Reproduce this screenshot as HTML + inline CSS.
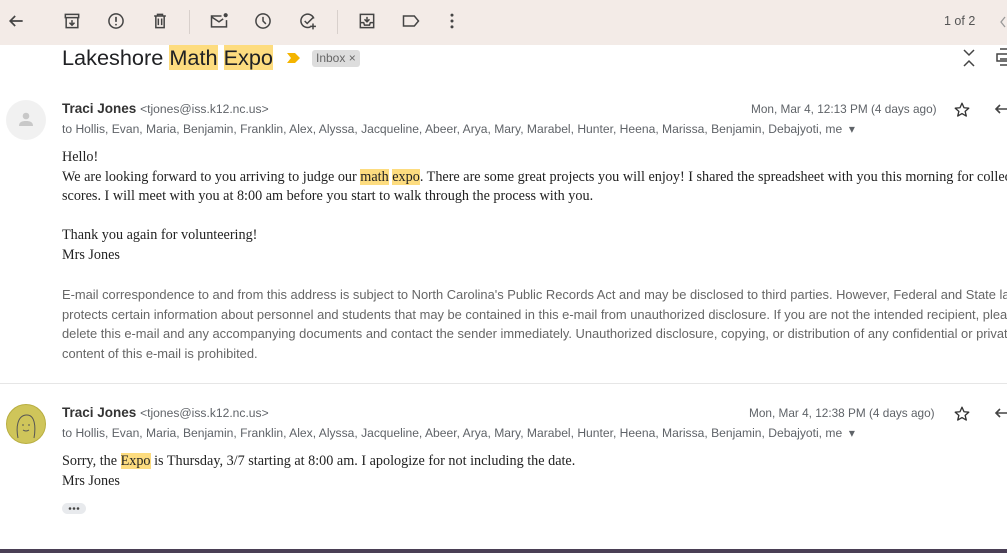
<!DOCTYPE html>
<html><head><meta charset="utf-8"><style>
*{margin:0;padding:0;box-sizing:border-box}
body{width:1007px;height:553px;overflow:hidden;background:#fff;position:relative;font-family:"Liberation Sans",Arial,sans-serif;color:#222}
.a{position:absolute;white-space:nowrap}
.tb{position:absolute;left:0;top:0;width:1007px;height:45px;background:#f3ebe7}
.ic{position:absolute;top:11px}
.hl{background:#fddc7f}
.ser{font-family:"Liberation Serif","DejaVu Serif",serif;font-size:14.2px;color:#222}
.sm{font-size:12.1px;color:#5f6368}
</style></head><body>
<div class="tb"></div>
<svg class="ic" style="left:6px" width="20" height="20" viewBox="0 0 24 24"><path d="M20 12H5M11 6l-6 6 6 6" fill="none" stroke="#444" stroke-width="2"/></svg>
<svg class="ic" style="left:62px" width="20" height="20" viewBox="0 0 24 24"><path d="M4 4h16v4H4zM5 8v12h14V8M12 11v6M9 14l3 3 3-3" fill="none" stroke="#444" stroke-width="1.8"/></svg>
<svg class="ic" style="left:106px" width="20" height="20" viewBox="0 0 24 24"><circle cx="12" cy="12" r="8.5" fill="none" stroke="#444" stroke-width="1.8"/><path d="M12 7v6M12 15.5v1.8" stroke="#444" stroke-width="2"/></svg>
<svg class="ic" style="left:150px" width="20" height="20" viewBox="0 0 24 24"><path d="M5 6h14M9 6V4h6v2M7 6v14h10V6M10 9v8M14 9v8" fill="none" stroke="#444" stroke-width="1.8"/></svg>
<div class="a" style="left:189px;top:10px;width:1px;height:24px;background:#d8d0cc"></div>
<svg class="ic" style="left:209px" width="20" height="20" viewBox="0 0 24 24"><path d="M15 6H3v13h18v-8M3 7l9 6 5-3.5" fill="none" stroke="#444" stroke-width="1.8"/><circle cx="20" cy="5" r="2.5" fill="#444"/></svg>
<svg class="ic" style="left:253px" width="20" height="20" viewBox="0 0 24 24"><circle cx="12" cy="12" r="8.5" fill="none" stroke="#444" stroke-width="1.8"/><path d="M12 7v5l3.5 3.5" fill="none" stroke="#444" stroke-width="1.8"/></svg>
<svg class="ic" style="left:298px" width="20" height="20" viewBox="0 0 24 24"><path d="M19 9a8 8 0 1 0-4 10M8 12l3 3 7-7M18 15v7M14.5 18.5h7" fill="none" stroke="#444" stroke-width="1.8"/></svg>
<div class="a" style="left:337px;top:10px;width:1px;height:24px;background:#d8d0cc"></div>
<svg class="ic" style="left:357px" width="20" height="20" viewBox="0 0 24 24"><path d="M4 4h16v16H4zM4 14h4l1 3h6l1-3h4M12 7v6M9 10l3 3 3-3" fill="none" stroke="#444" stroke-width="1.8"/></svg>
<svg class="ic" style="left:401px" width="20" height="20" viewBox="0 0 24 24"><path d="M3 6h13l5 6-5 6H3z" fill="none" stroke="#444" stroke-width="1.8"/></svg>
<svg class="ic" style="left:442px" width="20" height="20" viewBox="0 0 24 24"><circle cx="12" cy="5" r="1.8" fill="#444"/><circle cx="12" cy="12" r="1.8" fill="#444"/><circle cx="12" cy="19" r="1.8" fill="#444"/></svg>
<div class="a" style="left:944px;top:14px;font-size:12.5px;color:#555">1 of 2</div>
<svg class="a" style="left:999px;top:16px" width="8" height="12" viewBox="0 0 8 12"><path d="M6 1L2 6l4 5" fill="none" stroke="#999" stroke-width="1.3"/></svg>

<div class="a" style="left:62px;top:44px;font-size:21.7px;color:#202124;line-height:28px">Lakeshore <span class="hl">Math</span> <span class="hl">Expo</span></div>
<svg class="a" style="left:287px;top:52px" width="14" height="12" viewBox="0 0 14 12"><path d="M0 1h8l5 5-5 5H0l4-5z" fill="#f4b400"/></svg>
<div class="a" style="left:312px;top:50px;height:17px;padding:0 4px;background:#ddd;border-radius:3px;font-size:12px;line-height:17px;color:#666">Inbox ×</div>
<svg class="a" style="left:962px;top:48px" width="14" height="20" viewBox="0 0 14 20"><path d="M2 2l5 5 5-5M2 18l5-5 5 5" fill="none" stroke="#444" stroke-width="1.5"/></svg>
<svg class="a" style="left:996px;top:48px" width="14" height="18" viewBox="0 0 14 18"><path d="M4 1h8v5M1 6h12v7H1zM4 11h8v6H4" fill="none" stroke="#444" stroke-width="1.5"/></svg>

<div class="a" style="left:6px;top:100px;width:40px;height:40px;border-radius:50%;background:#f1f1f1"></div>
<svg class="a" style="left:18px;top:111px" width="16" height="16" viewBox="0 0 16 16"><circle cx="8" cy="5" r="3.3" fill="#c8c8c8"/><path d="M1 15c0-4 3-5 7-5s7 1 7 5z" fill="#c8c8c8"/></svg>
<div class="a" style="left:62px;top:101px;font-size:13.5px"><b style="color:#333">Traci Jones</b> <span class="sm">&lt;tjones@iss.k12.nc.us&gt;</span></div>
<div class="a sm" style="left:62px;top:122px">to Hollis, Evan, Maria, Benjamin, Franklin, Alex, Alyssa, Jacqueline, Abeer, Arya, Mary, Marabel, Hunter, Heena, Marissa, Benjamin, Debajyoti, me &nbsp;▾</div>
<div class="a" style="left:751px;top:102px;font-size:11.8px;color:#5f6368">Mon, Mar 4, 12:13 PM (4 days ago)</div>
<svg class="a" style="left:953px;top:101px" width="18" height="18" viewBox="0 0 24 24"><path d="M12 3l2.7 6 6.3.6-4.8 4.2 1.5 6.3L12 16.8 6.3 20.1l1.5-6.3L3 9.6 9.3 9z" fill="none" stroke="#333" stroke-width="1.8" stroke-linejoin="round"/></svg>
<svg class="a" style="left:994px;top:102px" width="14" height="14" viewBox="0 0 14 14"><path d="M14 7H2M6 3L2 7l4 4" fill="none" stroke="#444" stroke-width="1.6"/></svg>

<div class="a ser" style="left:62px;top:148px;line-height:19.5px">Hello!<br>We are looking forward to you arriving to judge our <span class="hl">math</span> <span class="hl">expo</span>. There are some great projects you will enjoy! I shared the spreadsheet with you this morning for collecting<br>scores. I will meet with you at 8:00 am before you start to walk through the process with you.<br><br>Thank you again for volunteering!<br>Mrs Jones</div>
<div class="a" style="left:62px;top:285px;font-size:12.9px;line-height:19.5px;color:#666">E-mail correspondence to and from this address is subject to North Carolina's Public Records Act and may be disclosed to third parties. However, Federal and State law<br>protects certain information about personnel and students that may be contained in this e-mail from unauthorized disclosure. If you are not the intended recipient, please<br>delete this e-mail and any accompanying documents and contact the sender immediately. Unauthorized disclosure, copying, or distribution of any confidential or private<br>content of this e-mail is prohibited.</div>

<div class="a" style="left:0;top:383px;width:1007px;height:1px;background:#e6e6e6"></div>

<div class="a" style="left:6px;top:404px;width:40px;height:40px;border-radius:50%;background:#cfc55a;border:1px solid #b8ae40"></div>
<svg class="a" style="left:14px;top:410px" width="24" height="30" viewBox="0 0 24 30"><path d="M4 28C2 18 3 6 12 5s10 12 8 23M8 15h2M14 15h2M9 20q3 2 6 0" fill="none" stroke="#555" stroke-width="1"/></svg>
<div class="a" style="left:62px;top:405px;font-size:13.5px"><b style="color:#333">Traci Jones</b> <span class="sm">&lt;tjones@iss.k12.nc.us&gt;</span></div>
<div class="a sm" style="left:62px;top:426px">to Hollis, Evan, Maria, Benjamin, Franklin, Alex, Alyssa, Jacqueline, Abeer, Arya, Mary, Marabel, Hunter, Heena, Marissa, Benjamin, Debajyoti, me &nbsp;▾</div>
<div class="a" style="left:749px;top:406px;font-size:11.8px;color:#5f6368">Mon, Mar 4, 12:38 PM (4 days ago)</div>
<svg class="a" style="left:953px;top:405px" width="18" height="18" viewBox="0 0 24 24"><path d="M12 3l2.7 6 6.3.6-4.8 4.2 1.5 6.3L12 16.8 6.3 20.1l1.5-6.3L3 9.6 9.3 9z" fill="none" stroke="#333" stroke-width="1.8" stroke-linejoin="round"/></svg>
<svg class="a" style="left:994px;top:406px" width="14" height="14" viewBox="0 0 14 14"><path d="M14 7H2M6 3L2 7l4 4" fill="none" stroke="#444" stroke-width="1.6"/></svg>
<div class="a ser" style="left:62px;top:452px;line-height:19.5px">Sorry, the <span class="hl">Expo</span> is Thursday, 3/7 starting at 8:00 am. I apologize for not including the date.<br>Mrs Jones</div>
<div class="a" style="left:62px;top:503px;width:24px;height:11px;border-radius:6px;background:#e8eaed"></div>
<svg class="a" style="left:62px;top:503px" width="24" height="11" viewBox="0 0 24 11"><circle cx="8" cy="5.5" r="1.3" fill="#444"/><circle cx="12" cy="5.5" r="1.3" fill="#444"/><circle cx="16" cy="5.5" r="1.3" fill="#444"/></svg>

<div class="a" style="left:0;top:549px;width:1007px;height:4px;background:#4a3f55"></div>
</body></html>
